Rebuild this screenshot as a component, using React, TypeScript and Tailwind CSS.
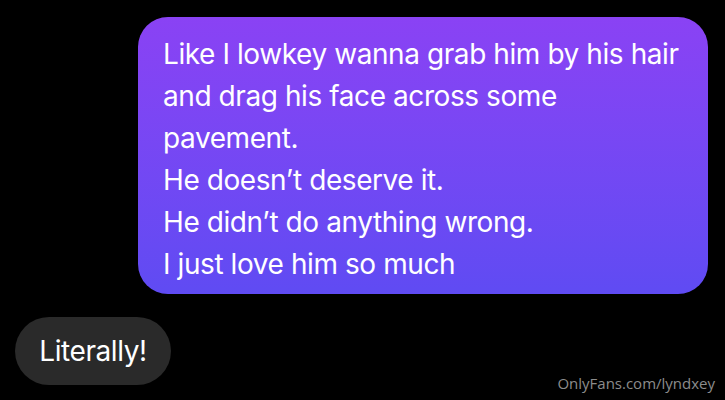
import React from 'react';

const lines = [
  'Like I lowkey wanna grab him by his hair',
  'and drag his face across some',
  'pavement.',
  'He doesn\u2019t deserve it.',
  'He didn\u2019t do anything wrong.',
  'I just love him so much',
];

export default function App() {
  return (
    <div className="relative w-[725px] h-[400px] bg-black overflow-hidden font-['Inter',sans-serif]">
      <div className="flex flex-col pt-[17px]">
        {/* Outgoing bubble */}
        <div className="ml-[138px] w-[570px] h-[277px] rounded-[30px] bg-gradient-to-b from-[#8a42f4] to-[#5f4bf3] pl-[25px] pt-[16px] text-white text-[28px] leading-[42px] tracking-[-0.42px]">
          {lines.map((l) => (
            <div key={l}>{l}</div>
          ))}
        </div>

        {/* Incoming bubble */}
        <div className="mt-[23px] ml-[15px] w-[156px] h-[68px] rounded-full bg-[#2a2a2a] flex items-center justify-center text-white text-[28px] tracking-[-0.42px]">
          Literally!
        </div>
      </div>

      {/* Watermark */}
      <div className="absolute right-[10px] bottom-[6px] text-[#8c8c8c] text-[15px] font-['Open_Sans',sans-serif]">
        OnlyFans.com/lyndxey
      </div>
    </div>
  );
}
